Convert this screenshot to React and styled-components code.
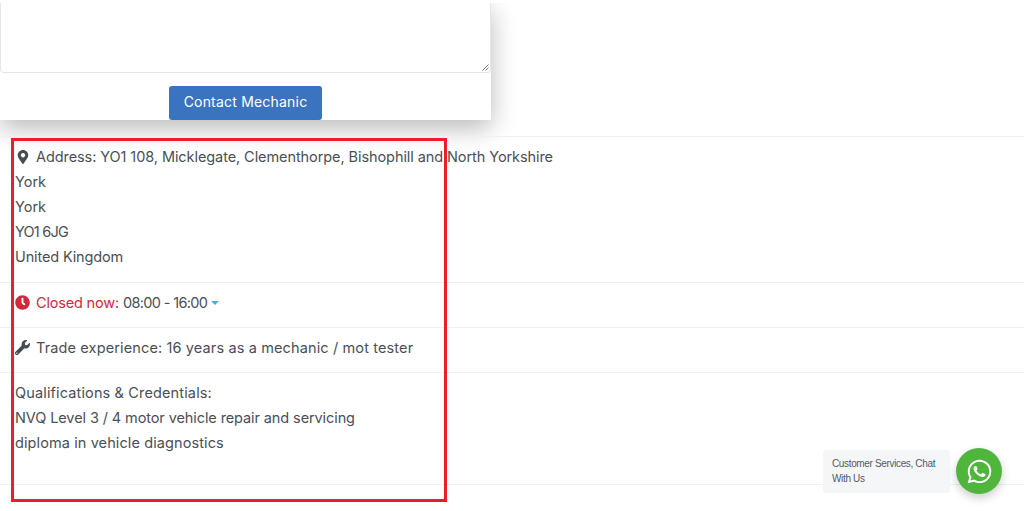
import React from "react";
import styled, { createGlobalStyle } from "styled-components";
import { FaMapMarkerAlt, FaClock, FaWrench, FaWhatsapp } from "react-icons/fa";

const GlobalStyle = createGlobalStyle`
  html, body {
    margin: 0;
    height: 511px;
    overflow: hidden;
    background: #fff;
  }
  * { box-sizing: border-box; }
`;

const Page = styled.div`
  position: relative;
  width: 1024px;
  height: 511px;
  overflow: hidden;
  font-family: "Inter", "Liberation Sans", sans-serif;
  font-size: 14.5px;
  line-height: 25px;
  color: #4a4f57;
`;

const TopStrip = styled.div`
  position: relative;
  z-index: 1;
  height: 3px;
  background: #fff;
`;

const FormCard = styled.div`
  width: 491px;
  height: 117px;
  background: #fff;
  box-shadow: 0 8px 24px rgba(0, 0, 0, 0.28);
  display: flex;
  flex-direction: column;
  align-items: center;
`;

const MessageBox = styled.div`
  position: relative;
  width: 100%;
  height: 70px;
  flex: none;
  border: 1px solid #e4e6ea;
  border-top: 0;
  border-radius: 0 0 4px 4px;
`;

const ResizeGrip = styled.svg`
  position: absolute;
  right: 1px;
  bottom: 1px;
  width: 7px;
  height: 7px;
`;

const ContactButton = styled.button`
  margin-top: 13px;
  width: 153px;
  height: 34px;
  padding: 0 0 3px;
  border: 0;
  border-radius: 3px;
  background: #3a74c1;
  color: #fff;
  font-family: inherit;
  font-size: 14px;
  font-weight: 400;
  letter-spacing: 0.2px;
`;

const Details = styled.div`
  margin-top: 16px;
  border-top: 1px solid #f0f0f0;
`;

const Row = styled.div`
  padding: 7px 15px ${(p) => p.$bottom || 13}px;
  border-bottom: 1px solid #f0f0f0;
`;

const IconLine = styled.div`
  display: flex;
  align-items: center;
  gap: 6px;
  white-space: nowrap;
`;

const IconSlot = styled.span`
  width: 15px;
  display: flex;
  justify-content: center;
  color: ${(p) => p.$color || "#474b52"};
  font-size: ${(p) => p.$size || 14}px;
`;

const Text = styled.span`
  letter-spacing: ${(p) => p.$track || 0}px;
  color: ${(p) => p.$color || "inherit"};
`;

const Line = styled.div`
  white-space: nowrap;
`;

const Caret = styled.span`
  display: inline-block;
  margin-left: 4px;
  margin-bottom: 3px;
  border-left: 4px solid transparent;
  border-right: 4px solid transparent;
  border-top: 4px solid #3fb4d8;
`;

const Highlight = styled.div`
  position: absolute;
  left: 11px;
  top: 138px;
  width: 436px;
  height: 364px;
  border: 3px solid #ee1c2c;
  pointer-events: none;
`;

const ChatWidget = styled.div`
  position: absolute;
  left: 823px;
  top: 448px;
  display: flex;
  align-items: center;
  gap: 5px;
`;

const ChatBubble = styled.div`
  width: 127px;
  height: 43px;
  padding: 6px 9px;
  background: #f4f6f8;
  border-radius: 3px;
  font-family: "Liberation Sans", Arial, sans-serif;
  font-size: 10px;
  letter-spacing: -0.35px;
  line-height: 15px;
  color: #555a64;
`;

const ChatButton = styled.div`
  width: 46px;
  height: 46px;
  margin-left: 1px;
  border-radius: 50%;
  background: #4fb53c;
  color: #fff;
  font-size: 27px;
  display: flex;
  align-items: center;
  justify-content: center;
  box-shadow: 0 4px 10px rgba(0, 0, 0, 0.2);
`;

export default function App() {
  return (
    <Page>
      <GlobalStyle />
      <TopStrip />
      <FormCard>
        <MessageBox>
          <ResizeGrip viewBox="0 0 7 7">
            <path d="M0.5 6.5 L6.5 0.5 M3.5 6.5 L6.5 3.5" stroke="#777" strokeWidth="1" />
          </ResizeGrip>
        </MessageBox>
        <ContactButton>Contact Mechanic</ContactButton>
      </FormCard>

      <Details>
        <Row>
          <IconLine>
            <IconSlot><FaMapMarkerAlt /></IconSlot>
            <Text $track={-0.08}>Address: YO1 108, Micklegate, Clementhorpe, Bishophill and North Yorkshire</Text>
          </IconLine>
          <Line>York</Line>
          <Line>York</Line>
          <Line><Text $track={-0.8}>YO1 6JG</Text></Line>
          <Line><Text $track={-0.14}>United Kingdom</Text></Line>
        </Row>
        <Row $bottom={12}>
          <IconLine>
            <IconSlot $color="#d0283c" $size={15}><FaClock /></IconSlot>
            <span>
              <Text $color="#d0283c" $track={-0.18}>Closed now:</Text>{" "}
              <Text $track={-0.65}>08:00 - 16:00</Text>
              <Caret />
            </span>
          </IconLine>
        </Row>
        <Row $bottom={12}>
          <IconLine>
            <IconSlot $size={15}><FaWrench /></IconSlot>
            <Text $track={0.13}>Trade experience: 16 years as a mechanic / mot tester</Text>
          </IconLine>
        </Row>
        <Row $bottom={29}>
          <Line><Text $track={0.14}>Qualifications &amp; Credentials:</Text></Line>
          <Line><Text $track={-0.1}>NVQ Level 3 / 4 motor vehicle repair and servicing</Text></Line>
          <Line><Text $track={0.1}>diploma in vehicle diagnostics</Text></Line>
        </Row>
      </Details>

      <Highlight />

      <ChatWidget>
        <ChatBubble>Customer Services, Chat With Us</ChatBubble>
        <ChatButton><FaWhatsapp /></ChatButton>
      </ChatWidget>
    </Page>
  );
}
